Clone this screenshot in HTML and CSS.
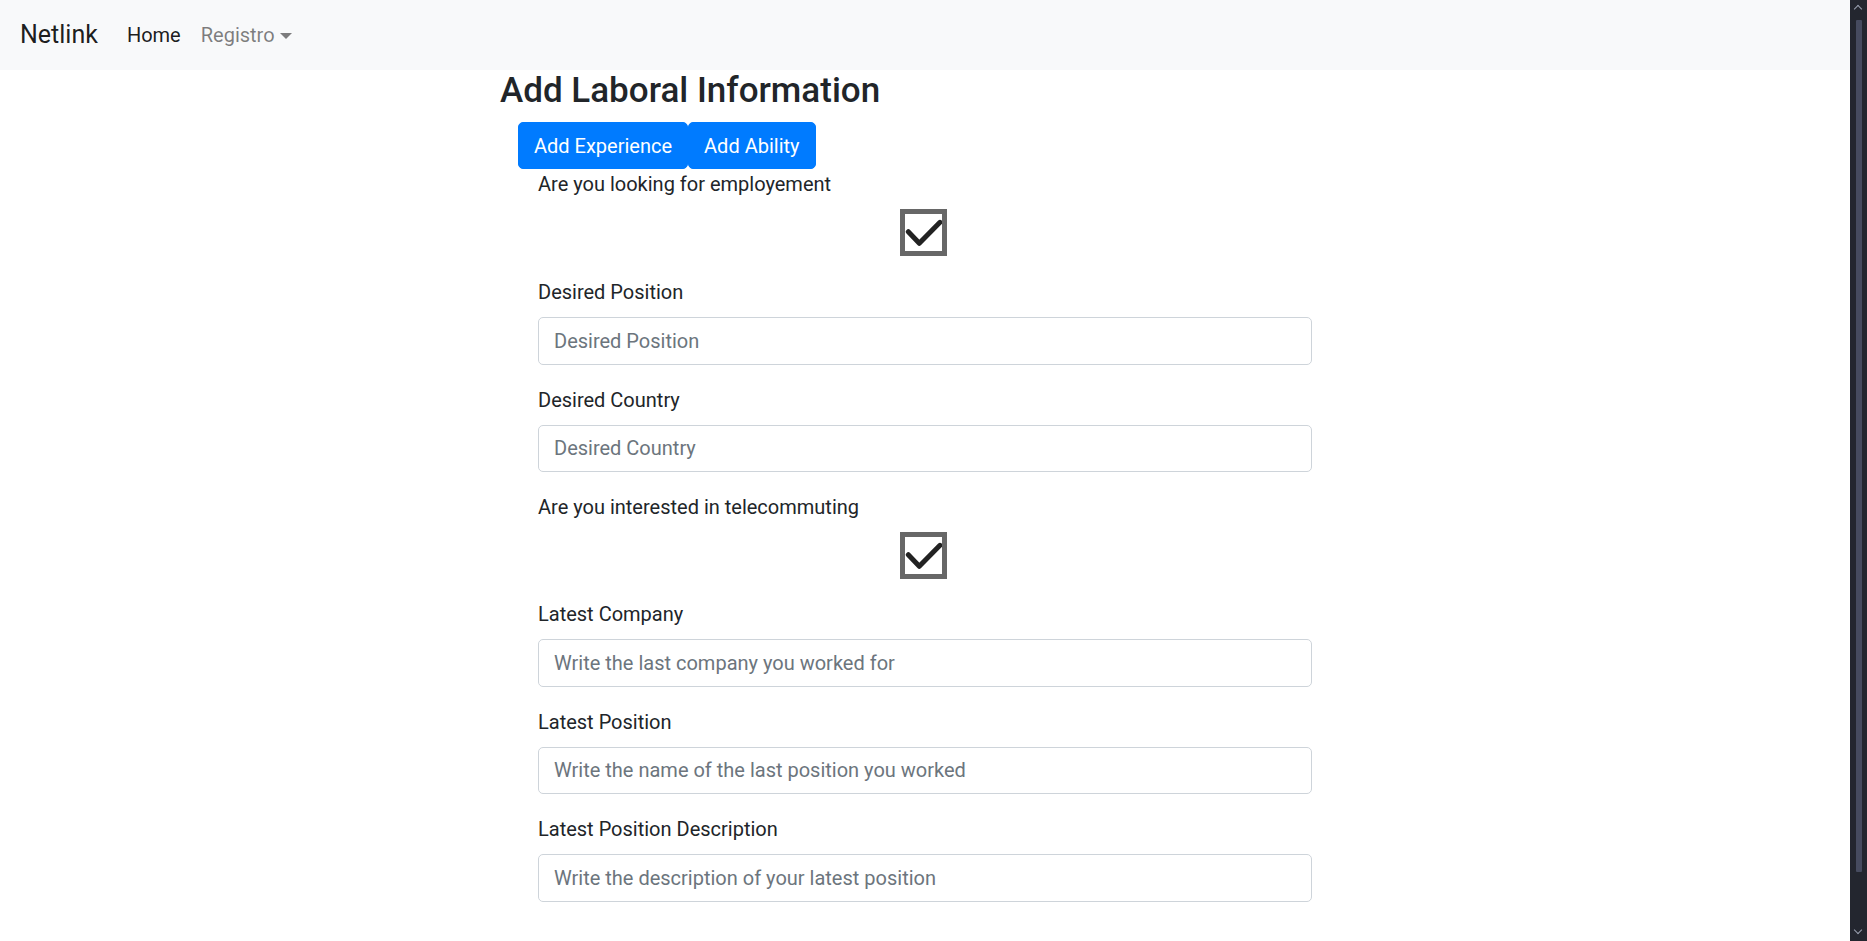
FILE: index.html
```html
<!DOCTYPE html>
<html lang="en">
<head>
<meta charset="utf-8">
<title>Netlink</title>
<link rel="stylesheet" href="styles.css">
</head>
<body>
<div class="viewport">
  <nav class="navbar">
    <a class="brand" href="#">Netlink</a>
    <ul class="nav">
      <li><a class="nav-link active" href="#">Home</a></li>
      <li><a class="nav-link dropdown" href="#">Registro<span class="caret"></span></a></li>
    </ul>
  </nav>
  <main class="container">
    <h3 class="title">Add Laboral Information</h3>
    <div class="btn-row">
      <button class="btn">Add Experience</button><button class="btn">Add Ability</button>
    </div>
    <form class="form">
      <div class="group group-first">
        <label class="label">Are you looking for employement</label>
        <div class="check">
          <svg viewBox="0 0 37 37" width="37" height="37"><path d="M3.3 17.7 L14.3 29.3 L35 8.3" fill="none" stroke="#222" stroke-width="5" stroke-linecap="round" stroke-linejoin="round"/></svg>
        </div>
      </div>
      <div class="group">
        <label class="label">Desired Position</label>
        <input class="input" type="text" placeholder="Desired Position">
      </div>
      <div class="group">
        <label class="label">Desired Country</label>
        <input class="input" type="text" placeholder="Desired Country">
      </div>
      <div class="group">
        <label class="label">Are you interested in telecommuting</label>
        <div class="check">
          <svg viewBox="0 0 37 37" width="37" height="37"><path d="M3.3 17.7 L14.3 29.3 L35 8.3" fill="none" stroke="#222" stroke-width="5" stroke-linecap="round" stroke-linejoin="round"/></svg>
        </div>
      </div>
      <div class="group">
        <label class="label">Latest Company</label>
        <input class="input" type="text" placeholder="Write the last company you worked for">
      </div>
      <div class="group">
        <label class="label">Latest Position</label>
        <input class="input" type="text" placeholder="Write the name of the last position you worked">
      </div>
      <div class="group">
        <label class="label">Latest Position Description</label>
        <input class="input" type="text" placeholder="Write the description of your latest position">
      </div>
    </form>
  </main>
</div>
<div class="scrollbar">
  <div class="sb-arrow sb-up"></div>
  <div class="sb-track"><div class="sb-thumb"></div></div>
  <div class="sb-arrow sb-down"></div>
</div>
</body>
</html>
```

FILE: styles.css
```css
* { box-sizing: border-box; }
html, body { margin: 0; padding: 0; height: 100%; }
body {
  display: flex;
  font-family: Roboto, "Liberation Sans", Arial, sans-serif;
  font-size: 20px;
  line-height: 1.5;
  color: #212529;
  background: #fff;
  overflow: hidden;
}
.viewport { flex: 1; min-width: 0; height: 100%; overflow: hidden; }

.navbar {
  display: flex;
  align-items: center;
  height: 70px;
  padding: 0 20px;
  background: #f8f9fa;
}
.brand {
  font-size: 25px;
  line-height: 37.5px;
  color: rgba(0,0,0,.9);
  text-decoration: none;
  margin-right: 19px;
}
.nav { display: flex; list-style: none; margin: 0; padding: 0; }
.nav-link {
  display: block;
  padding: 10px;
  line-height: 30px;
  color: rgba(0,0,0,.5);
  text-decoration: none;
}
.nav-link.active { color: rgba(0,0,0,.9); }
.caret {
  display: inline-block;
  margin-left: 5px;
  vertical-align: 3px;
  border-top: 6px solid;
  border-left: 6px solid transparent;
  border-right: 6px solid transparent;
}

.container { width: 850px; margin: 0 auto; }
.title {
  margin: 0 0 10px;
  font-size: 35px;
  font-weight: 500;
  line-height: 42px;
}
.btn-row { display: flex; margin-left: 18px; }
.btn {
  font-family: inherit;
  font-size: 20px;
  line-height: 30px;
  padding: 7.5px 15px;
  border: 1.25px solid #007bff;
  border-radius: 5px;
  background: #007bff;
  color: #fff;
  cursor: pointer;
}
.form { padding: 0 38px; }
.group { margin-bottom: 20px; }
.group-first { margin-bottom: 21px; }
.label { display: block; line-height: 30px; margin-bottom: 10px; }
.input {
  display: block;
  width: 100%;
  height: 47.5px;
  padding: 7.5px 15px;
  font-family: inherit;
  font-size: 20px;
  line-height: 30px;
  color: #495057;
  background: #fff;
  border: 1.25px solid #ced4da;
  border-radius: 5px;
}
.input::placeholder { color: #6c757d; opacity: 1; }
.check {
  width: 47px;
  height: 47px;
  margin: 0 auto;
  position: relative;
  left: -2px;
  border: 5px solid #676767;
  background: #fff;
}
.check svg { display: block; }

.scrollbar {
  width: 17px;
  height: 100%;
  background: #23262f;
  display: flex;
  flex-direction: column;
  align-items: center;
}
.sb-arrow { height: 17px; width: 17px; position: relative; }
.sb-arrow::before {
  content: "";
  position: absolute;
  left: 5px; top: 6px;
  width: 5px; height: 5px;
  border-left: 1.5px solid #9aa0b0;
  border-top: 1.5px solid #9aa0b0;
  transform: rotate(45deg);
}
.sb-down::before { transform: rotate(225deg); top: 3px; }
.sb-track { flex: 1; width: 100%; display: flex; justify-content: center; padding-top: 3px; }
.sb-thumb { width: 6px; height: 852px; background: #464b5f; border-radius: 1px; }
```
